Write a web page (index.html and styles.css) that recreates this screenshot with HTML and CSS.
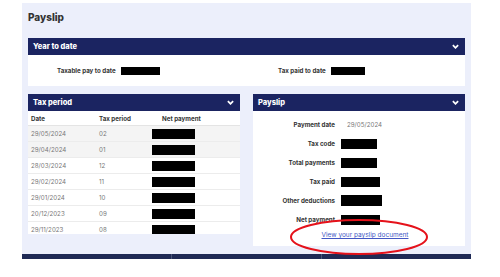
FILE: index.html
```html
<!DOCTYPE html>
<html lang="en">
  <head>
    <title>Payslip</title>
    <link rel="stylesheet" href="styles.css">
  </head>
  <body>

  <div class="payslip-page">
    <h1>Payslip</h1>

    <div class="card">
      <div class="card-header">
        <span>Year to date</span>
        <svg class="chevron" viewBox="0 0 8 5"><polyline points="1,1 4,4 7,1"/></svg>
      </div>
      <div class="ytd-body">
        <div class="ytd-item ytd-left">
          <span class="label">Taxable pay to date</span>
          <span class="redact redact-ytd1"></span>
        </div>
        <div class="ytd-item ytd-right">
          <span class="label">Tax paid to date</span>
          <span class="redact redact-ytd2"></span>
        </div>
      </div>
    </div>

    <div class="columns">
      <div class="card">
        <div class="card-header">
          <span>Tax period</span>
          <svg class="chevron" viewBox="0 0 8 5"><polyline points="1,1 4,4 7,1"/></svg>
        </div>
        <div class="periods">
          <div class="period-row period-head">
            <span>Date</span>
            <span>Tax period</span>
            <span class="net-head">Net payment</span>
          </div>
          <div class="period-row shaded"><span>29/05/2024</span><span>02</span><span class="redact redact-net"></span></div>
          <div class="period-row shaded"><span>29/04/2024</span><span>01</span><span class="redact redact-net"></span></div>
          <div class="period-row"><span>28/03/2024</span><span>12</span><span class="redact redact-net"></span></div>
          <div class="period-row"><span>29/02/2024</span><span>11</span><span class="redact redact-net"></span></div>
          <div class="period-row"><span>29/01/2024</span><span>10</span><span class="redact redact-net"></span></div>
          <div class="period-row"><span>20/12/2023</span><span>09</span><span class="redact redact-net"></span></div>
          <div class="period-row"><span>29/11/2023</span><span>08</span><span class="redact redact-net"></span></div>
          <div class="periods-more"></div>
        </div>
      </div>

      <div class="card payslip-card">
        <div class="card-header">
          <span>Payslip</span>
          <svg class="chevron" viewBox="0 0 8 5"><polyline points="1,1 4,4 7,1"/></svg>
        </div>
        <div class="payslip-body">
          <div class="detail-row">
            <span class="label">Payment date</span>
            <span class="value">29/05/2024</span>
          </div>
          <div class="detail-row">
            <span class="label">Tax code</span>
            <span class="redact redact-a"></span>
          </div>
          <div class="detail-row">
            <span class="label">Total payments</span>
            <span class="redact redact-a"></span>
          </div>
          <div class="detail-row">
            <span class="label">Tax paid</span>
            <span class="redact redact-b"></span>
          </div>
          <div class="detail-row">
            <span class="label">Other deductions</span>
            <span class="redact redact-c"></span>
          </div>
          <div class="detail-row">
            <span class="label">Net payment</span>
            <span class="redact redact-b"></span>
          </div>
          <a class="doc-link" href="#">View your payslip document</a>
        </div>
        <!-- red annotation circled on the screenshot -->
        <svg class="annotation" viewBox="0 0 140 38">
          <ellipse cx="70" cy="19" rx="68" ry="17"/>
        </svg>
      </div>
    </div>
  </div>

  <div class="footer-bar">
    <span></span>
    <span></span>
    <span></span>
  </div>

  </body>
</html>
```

FILE: styles.css
```css
body {
  margin: 0;
  background-color: #fff;
  font-family: Inter, "Noto Sans", sans-serif;
  color: #333;
}

.payslip-page {
  width: 437px;
  margin: 3px 0 0 22px;
  padding: 7px 6px 8px;
  background-color: #eceffb;
}

h1 {
  font-size: 10px;
  font-weight: 800;
  line-height: 14px;
  margin: 0 0 14px;
  color: #333;
}

.card {
  background-color: #fff;
}

.card-header {
  display: flex;
  justify-content: space-between;
  align-items: center;
  height: 17px;
  padding: 0 6px 0 5px;
  background-color: #1b2461;
  color: #fff;
  font-size: 7.5px;
  font-weight: 800;
}

.chevron {
  width: 7px;
  height: 5px;
}

.chevron polyline {
  fill: none;
  stroke: #fff;
  stroke-width: 2;
}

.label {
  font-size: 6.2px;
  font-weight: 700;
  color: #333;
}

.redact {
  display: inline-block;
  height: 10px;
  background-color: #000;
}

/* year to date */
.ytd-body {
  display: flex;
  align-items: center;
  height: 31px;
}

.ytd-item {
  display: flex;
  align-items: center;
  gap: 5px;
  flex: 1;
}

.ytd-left {
  padding-left: 29px;
}

.ytd-right {
  padding-left: 34px;
}

.redact-ytd1 {
  width: 39px;
  height: 8px;
}

.redact-ytd2 {
  width: 34px;
  height: 8px;
}

/* two columns */
.columns {
  display: flex;
  align-items: flex-start;
  gap: 13px;
  margin-top: 8px;
}

.columns .card {
  width: 212px;
}

.periods {
  height: 123px;
  overflow-y: scroll;
}

.periods::-webkit-scrollbar {
  width: 7px;
}

.periods::-webkit-scrollbar-track {
  background-color: #fafafa;
  margin: 4px 0;
}

.periods::-webkit-scrollbar-thumb {
  background-color: #858585;
  border-left: 2px solid #fafafa;
  border-right: 1px solid #fafafa;
}

.period-row {
  display: grid;
  grid-template-columns: 68px 53px 1fr;
  align-items: center;
  height: 15px;
  padding-left: 3px;
  border-bottom: 1px solid #ececec;
  font-size: 6.2px;
  color: #777;
}

.period-head {
  height: 14px;
  font-weight: 700;
  color: #333;
  border-bottom: 1px solid #e4e4e4;
}

.periods-more {
  height: 80px;
}

.net-head {
  padding-left: 10px;
}

.shaded {
  background-color: #f4f4f4;
}

.redact-net {
  width: 43px;
}

/* payslip */
.payslip-card {
  position: relative;
}

.payslip-body {
  display: flex;
  flex-direction: column;
  padding: 4px 0 6px;
}

.detail-row {
  display: grid;
  grid-template-columns: 82px 1fr;
  column-gap: 6px;
  align-items: center;
  height: 19px;
}

.detail-row .label {
  text-align: right;
}

.value {
  padding-left: 6px;
  font-size: 6.2px;
  color: #777;
}

.redact-a {
  width: 36px;
}

.redact-b {
  width: 39px;
}

.redact-c {
  width: 41px;
  height: 11px;
}

.doc-link {
  align-self: center;
  margin: 1px 0 0 12px;
  font-size: 6.5px;
  line-height: 10px;
  color: #4357c4;
}

.annotation {
  position: absolute;
  left: 36px;
  top: 124px;
  width: 140px;
  height: 38px;
}

.annotation ellipse {
  fill: none;
  stroke: #e5121b;
  stroke-width: 2;
}

.footer-bar {
  display: flex;
  width: 449px;
  height: 5px;
  margin-left: 22px;
  background-color: #1f2a55;
}

.footer-bar span {
  flex: 1;
}

.footer-bar span + span {
  border-left: 1px solid #4a5578;
}
```
